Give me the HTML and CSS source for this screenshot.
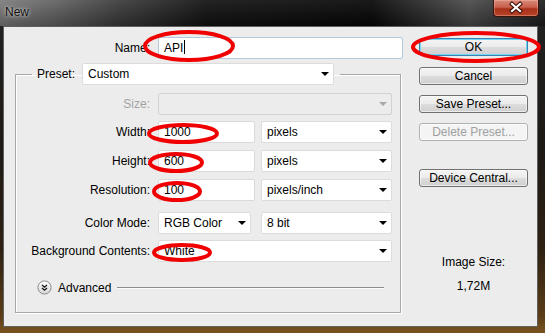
FILE: index.html
```html
<!DOCTYPE html>
<html lang="en">
<head>
    <meta charset="UTF-8">
    <title>New</title>
    <link rel="stylesheet" href="styles.css">
</head>
<body>
    <div class="window">
        <div class="titlebar">
            <span class="title">New</span>
            <div class="close-btn">
                <svg width="46" height="17" viewBox="0 0 46 17">
                    <path d="M19 4 L27 11 M27 4 L19 11" stroke="#3a0c04" stroke-width="4.2" stroke-linecap="square"/>
                    <path d="M19 4 L27 11 M27 4 L19 11" stroke="#fff" stroke-width="2.2" stroke-linecap="square"/>
                </svg>
            </div>
        </div>
        <div class="client">
            <div class="main">
                <div class="name-row">
                    <span class="label">Name:</span>
                    <div class="input name-input">API<span class="caret"></span></div>
                </div>
                <fieldset class="group">
                    <legend class="preset">
                        <span class="preset-label">Preset:</span>
                        <div class="select preset-select"><span>Custom</span><i class="arrow"></i></div>
                    </legend>
                    <div class="row row-size">
                        <span class="label disabled">Size:</span>
                        <div class="select select-full disabled"><span></span><i class="arrow"></i></div>
                    </div>
                    <div class="row row-width">
                        <span class="label">Width:</span>
                        <div class="input num-input">1000</div>
                        <div class="select unit-select"><span>pixels</span><i class="arrow"></i></div>
                    </div>
                    <div class="row row-next">
                        <span class="label">Height:</span>
                        <div class="input num-input">600</div>
                        <div class="select unit-select"><span>pixels</span><i class="arrow"></i></div>
                    </div>
                    <div class="row row-next">
                        <span class="label">Resolution:</span>
                        <div class="input num-input">100</div>
                        <div class="select unit-select"><span>pixels/inch</span><i class="arrow"></i></div>
                    </div>
                    <div class="row row-mode">
                        <span class="label">Color Mode:</span>
                        <div class="select mode-select"><span>RGB Color</span><i class="arrow"></i></div>
                        <div class="select bit-select"><span>8 bit</span><i class="arrow"></i></div>
                    </div>
                    <div class="row row-bg">
                        <span class="label">Background Contents:</span>
                        <div class="select select-full"><span>White</span><i class="arrow"></i></div>
                    </div>
                    <div class="advanced">
                        <svg class="adv-icon" width="15" height="15" viewBox="0 0 15 15">
                            <defs>
                                <linearGradient id="advFill" x1="0" y1="0" x2="0" y2="1">
                                    <stop offset="0" stop-color="#ffffff"/>
                                    <stop offset="1" stop-color="#d6d6d6"/>
                                </linearGradient>
                            </defs>
                            <circle cx="7.5" cy="7.5" r="6.6" fill="url(#advFill)" stroke="#8c8c8c"/>
                            <path d="M5 5 L7.5 7.2 L10 5 M5 8 L7.5 10.2 L10 8" fill="none" stroke="#1a1a1a" stroke-width="1.3"/>
                        </svg>
                        <span class="adv-text">Advanced</span>
                        <div class="rule"></div>
                    </div>
                </fieldset>
            </div>
            <div class="side">
                <div class="button default">OK</div>
                <div class="button btn-cancel">Cancel</div>
                <div class="button btn-save">Save Preset...</div>
                <div class="button btn-delete disabled">Delete Preset...</div>
                <div class="button btn-device">Device Central...</div>
                <div class="size-title">Image Size:</div>
                <div class="size-value">1,72M</div>
            </div>
        </div>

        <!-- red marks drawn over the dialog -->
        <svg class="marks" width="545" height="333" viewBox="0 0 545 333">
            <g fill="none" stroke="#f00000" stroke-width="4">
                <ellipse cx="189" cy="46" rx="44" ry="14"/>
                <ellipse cx="476" cy="47" rx="63" ry="14"/>
                <ellipse cx="183" cy="133.5" rx="34" ry="8.5"/>
                <ellipse cx="176" cy="162.5" rx="26" ry="8.5"/>
                <ellipse cx="177" cy="191.5" rx="23" ry="8.5"/>
                <ellipse cx="182" cy="252.5" rx="28" ry="7.5"/>
            </g>
        </svg>
    </div>
</body>
</html>
```

FILE: styles.css
```css
body {
    margin: 0;
    overflow: hidden;
    font-family: "Liberation Sans", Arial, sans-serif;
    font-size: 12px;
    color: #000;
    background-color: #1a1a1a;
}
.window {
    position: relative;
    width: 545px;
    height: 333px;
    background: linear-gradient(180deg, #222 0, #1d1915 45%, #2e2113 75%, #5a3d16 95%, #7a5420 100%);
}
.titlebar {
    height: 26px;
    display: flex;
    justify-content: space-between;
    align-items: flex-start;
    background:
        linear-gradient(180deg, rgba(255, 255, 255, 0.08) 0, rgba(0, 0, 0, 0.25) 100%),
        linear-gradient(90deg, #7c7c7c 0, #626262 10%, #3a3a3a 22%, #111 38%, #060606 68%, #333 80%, #4a4a4a 86%, #1c1c1c 100%);
}
.title {
    padding-left: 5px;
    line-height: 24px;
    color: #101010;
    text-shadow: 0 0 5px rgba(255, 255, 255, 0.7), 0 0 2px rgba(255, 255, 255, 0.5);
}
.close-btn {
    width: 44px;
    height: 16px;
    margin-right: 6px;
    border: 1px solid #3d120a;
    border-top: none;
    border-radius: 0 0 4px 4px;
    background: linear-gradient(180deg, #d98a7c 0, #c8604c 45%, #a8301a 55%, #b8442a 100%);
    box-shadow: inset 0 0 0 1px rgba(255, 200, 190, 0.35);
    overflow: hidden;
}
.close-btn svg {
    display: block;
    margin-left: -1px;
}
.client {
    box-sizing: border-box;
    height: 301px;
    margin: 0 7px 0 3px;
    border: 1px solid #5f5f5f;
    background-color: #ececec;
    display: flex;
}
.main {
    width: 399px;
}
.name-row {
    display: flex;
    align-items: center;
    gap: 8px;
    margin-top: 10px;
}
.label {
    width: 146px;
    text-align: right;
    white-space: nowrap;
}
.label.disabled {
    color: #a3a3a3;
}
.input {
    box-sizing: border-box;
    height: 22px;
    line-height: 20px;
    padding-left: 5px;
    background-color: #fff;
    border: 1px solid #dadada;
    border-radius: 2px;
}
.name-input {
    width: 245px;
    border-color: #b4c8da;
}
.caret {
    display: inline-block;
    width: 1px;
    height: 14px;
    margin-left: 1px;
    vertical-align: -2px;
    background-color: #000;
}
.group {
    box-sizing: border-box;
    width: 386px;
    margin: 4px 0 0 11px;
    padding: 0 0 17px 0;
    border: 1px solid #a8a8a8;
    box-shadow: 1px 1px 0 #fff, inset 1px 1px 0 #fff;
}
.preset {
    display: flex;
    align-items: center;
    gap: 7px;
    margin-left: 16px;
    padding: 0 6px 0 5px;
}
.select {
    box-sizing: border-box;
    height: 22px;
    line-height: 20px;
    padding-left: 5px;
    display: flex;
    justify-content: space-between;
    align-items: center;
    background-color: #fff;
    border: 1px solid #dcdcdc;
    border-radius: 2px;
}
.select.disabled {
    background-color: #ececec;
    border-color: #d2d2d2;
}
.arrow {
    width: 0;
    height: 0;
    margin-right: 4px;
    border-left: 4px solid transparent;
    border-right: 4px solid transparent;
    border-top: 4px solid #000;
}
.select.disabled .arrow {
    border-top-color: #a8a8a8;
}
.preset-select {
    width: 252px;
}
.row {
    display: flex;
    align-items: center;
    height: 22px;
}
.row .label {
    width: 134px;
    margin-right: 8px;
}
.row-size {
    margin-top: 8px;
}
.row-width {
    margin-top: 6px;
}
.row-next {
    margin-top: 7px;
}
.row-mode {
    margin-top: 11px;
}
.row-bg {
    margin-top: 6px;
}
.select-full {
    width: 234px;
}
.num-input {
    width: 97px;
    margin-right: 6px;
}
.unit-select,
.bit-select {
    width: 131px;
}
.mode-select {
    width: 93px;
    margin-right: 10px;
}
.advanced {
    display: flex;
    align-items: center;
    height: 15px;
    margin: 18px 16px 0 21px;
}
.adv-icon {
    display: block;
    flex: none;
    margin-right: 6px;
}
.adv-text {
    flex: none;
    margin-right: 6px;
}
.rule {
    flex: 1 1 auto;
    height: 0;
    border-top: 1px solid #8c8c8c;
    border-bottom: 1px solid #fbfbfb;
}
.side {
    width: 109px;
    margin-left: 16px;
    padding-top: 11px;
    display: flex;
    flex-direction: column;
}
.button {
    box-sizing: border-box;
    height: 18px;
    line-height: 16px;
    text-align: center;
    border: 1px solid #707070;
    border-radius: 3px;
    background: linear-gradient(180deg, #f4f4f4 0, #ebebeb 50%, #dddddd 51%, #cfcfcf 100%);
    box-shadow: inset 0 0 0 1px rgba(255, 255, 255, 0.6);
}
.button.default {
    border-color: #3c7fb1;
    box-shadow: inset 0 0 0 1px #6fd6f6;
}
.btn-cancel {
    margin-top: 11px;
}
.btn-save,
.btn-delete {
    margin-top: 10px;
}
.button.disabled {
    color: #a0a0a0;
    border-color: #adb2b5;
    background: #f4f4f4;
}
.btn-device {
    margin-top: 28px;
}
.size-title {
    margin-top: 68px;
    line-height: 14px;
    text-align: center;
}
.size-value {
    margin-top: 10px;
    line-height: 14px;
    text-align: center;
}
.marks {
    position: absolute;
    top: 0;
    left: 0;
    pointer-events: none;
}
```
